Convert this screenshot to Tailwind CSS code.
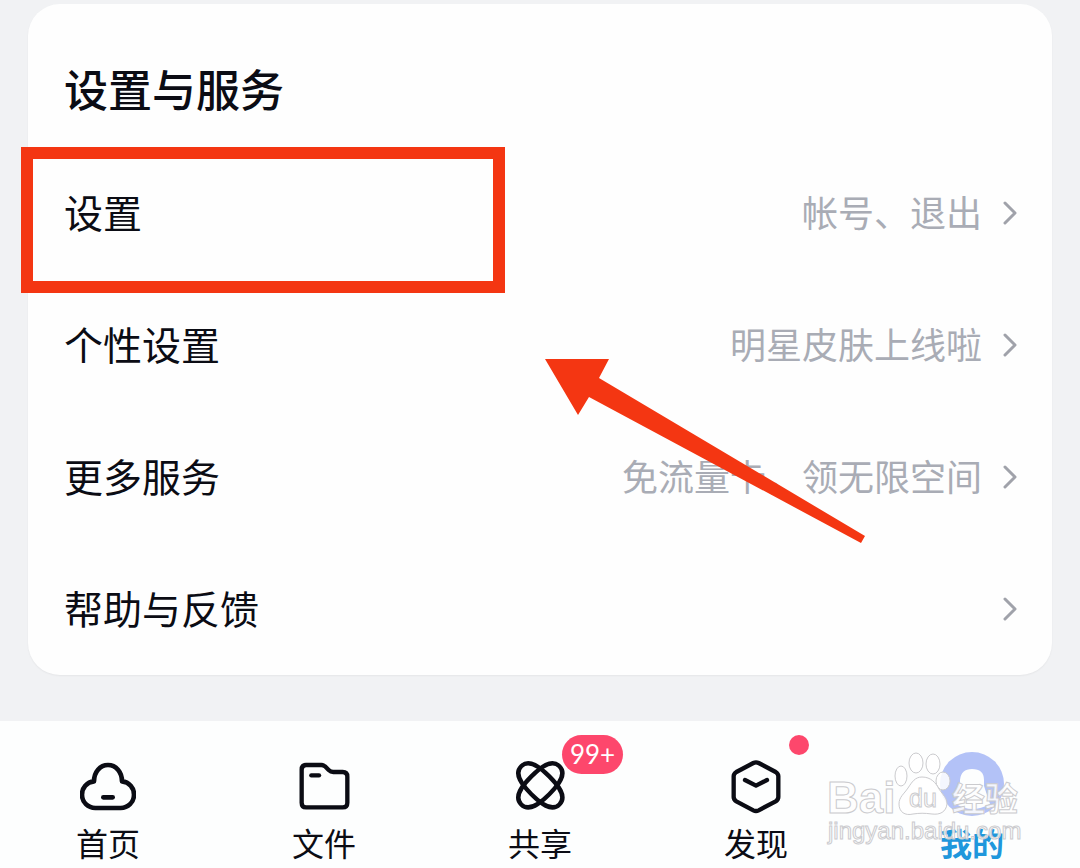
<!DOCTYPE html>
<html lang="zh-CN">
<head>
    <meta charset="UTF-8">
    <meta name="viewport" content="width=device-width, initial-scale=1.0">
    <title>设置与服务</title>
    <script src="https://cdn.jsdelivr.net/npm/@tailwindcss/browser@4"></script>
</head>
<body class="min-h-screen flex flex-col overflow-hidden bg-[#f1f2f4] text-[#0b0c14] font-['Noto_Sans_CJK_SC',sans-serif]">
    <!-- Settings card -->
    <main class="relative px-7 pt-1 pb-[46px]">
        <section class="bg-[#fefefe] rounded-[32px] pl-9 pr-[34px] shadow-xs">
            <h1 class="pt-[52px] pb-[27px] text-[44px] leading-[64px] font-medium">设置与服务</h1>
            <ul>
                <li>
                    <a href="#settings" class="flex items-center justify-between h-[132px]">
                        <span class="pb-1 text-[39px]">设置</span>
                        <span class="flex items-center gap-5 text-[36px] text-[#a9acb5]">
                            <span class="pb-1">帐号、退出</span>
                            <svg class="w-4 h-6" viewBox="0 0 16 24" fill="none" stroke="#a0a2aa" stroke-width="3" stroke-linecap="round" stroke-linejoin="round"><path d="M3 2l10 10L3 22"/></svg>
                        </span>
                    </a>
                </li>
                <li>
                    <a href="#personal" class="flex items-center justify-between h-[132px]">
                        <span class="pb-1 text-[39px]">个性设置</span>
                        <span class="flex items-center gap-5 text-[36px] text-[#a9acb5]">
                            <span class="pb-1">明星皮肤上线啦</span>
                            <svg class="w-4 h-6" viewBox="0 0 16 24" fill="none" stroke="#a0a2aa" stroke-width="3" stroke-linecap="round" stroke-linejoin="round"><path d="M3 2l10 10L3 22"/></svg>
                        </span>
                    </a>
                </li>
                <li>
                    <a href="#more" class="flex items-center justify-between h-[132px]">
                        <span class="pb-1 text-[39px]">更多服务</span>
                        <span class="flex items-center gap-5 text-[36px] text-[#a9acb5]">
                            <span class="pb-1">免流量卡，领无限空间</span>
                            <svg class="w-4 h-6" viewBox="0 0 16 24" fill="none" stroke="#a0a2aa" stroke-width="3" stroke-linecap="round" stroke-linejoin="round"><path d="M3 2l10 10L3 22"/></svg>
                        </span>
                    </a>
                </li>
                <li>
                    <a href="#help" class="flex items-center justify-between h-[132px]">
                        <span class="pb-1 text-[39px]">帮助与反馈</span>
                        <svg class="w-4 h-6" viewBox="0 0 16 24" fill="none" stroke="#a0a2aa" stroke-width="3" stroke-linecap="round" stroke-linejoin="round"><path d="M3 2l10 10L3 22"/></svg>
                    </a>
                </li>
            </ul>
        </section>

        <!-- Highlight box and arrow -->
        <div class="absolute left-[21px] top-[147px] w-[484px] h-[146px] border-[12px] border-[#f43612] pointer-events-none"></div>
        <svg class="absolute left-[545px] top-[358px] w-[320px] h-[186px] pointer-events-none" viewBox="0 0 320 186" fill="#f43612">
            <path d="M0 1H64L54 20L320 178L316 185L44 39L33 57Z"/>
        </svg>
    </main>

    <!-- Bottom tabs -->
    <nav class="relative grow grid grid-cols-5 bg-[#fdfefe] text-[32px] leading-10">
        <a href="#home" class="flex flex-col items-center pt-[39px] gap-1.5">
            <svg class="w-14 h-14" viewBox="0 0 168 168" fill="none" stroke="currentColor" stroke-width="14" stroke-linecap="round" stroke-linejoin="round">
                <path d="M42 64C42 36 60 15 84 15S126 36 126 64C148 66 162 84 162 104C162 127 144 144 122 144H46C24 144 6 127 6 104C6 84 20 66 42 64Z"/>
                <path d="M70 112H98"/>
            </svg>
            <span>首页</span>
        </a>
        <a href="#files" class="flex flex-col items-center pt-[39px] gap-1.5">
            <svg class="w-14 h-14" viewBox="0 0 168 168" fill="none" stroke="currentColor" stroke-width="13" stroke-linecap="round" stroke-linejoin="round">
                <path d="M30 15H76Q82 15 87 19L98 30Q104 36 112 36H140Q154 36 154 50V128Q154 142 140 142H30Q17 142 17 128V29Q17 15 30 15Z"/>
                <path d="M46 46H69"/>
            </svg>
            <span>文件</span>
        </a>
        <a href="#share" class="flex flex-col items-center pt-[39px] gap-1.5">
            <span class="relative">
                <svg class="w-14 h-14" viewBox="0 0 168 168" fill="none" stroke="currentColor" stroke-width="13">
                    <path d="M-81 0C-81 -34 -38 -38 0 -38S81 -34 81 0S38 38 0 38S-81 34 -81 0Z" transform="translate(85 76) rotate(45)"/>
                    <path d="M-81 0C-81 -34 -38 -38 0 -38S81 -34 81 0S38 38 0 38S-81 34 -81 0Z" transform="translate(85 76) rotate(-45)"/>
                </svg>
                <span class="absolute left-[50px] -top-[25px] w-[61px] h-[39px] rounded-full bg-[#fd476c] text-white text-[26px] leading-[39px] text-center font-['Lato',sans-serif]">99+</span>
            </span>
            <span>共享</span>
        </a>
        <a href="#discover" class="flex flex-col items-center pt-[39px] gap-1.5">
            <span class="relative">
                <svg class="w-14 h-14" viewBox="0 0 168 168" fill="none" stroke="currentColor" stroke-width="13" stroke-linecap="round" stroke-linejoin="round">
                    <path d="M76 9Q84 5 92 9L143 36Q151 41 151 49V111Q151 119 143 124L92 151Q84 155 76 151L25 124Q17 119 17 111V49Q17 41 25 36Z"/>
                    <path d="M51 60L84 77L117 60"/>
                </svg>
                <span class="absolute left-[61px] -top-[25px] size-5 rounded-full bg-[#fd476c]"></span>
            </span>
            <span>发现</span>
        </a>
        <a href="#mine" class="flex flex-col items-center pt-[31px] gap-1.5 text-[#1f97dc] font-bold">
            <svg class="w-16 h-16" viewBox="0 0 64 64">
                <circle cx="32" cy="32" r="32" fill="#b3c2f7"/>
                <path d="M20 28Q21 17 32 17Q44 17 44 28V34L50 52Q32 62 16 52L20 34Z" fill="#fdfefe"/>
            </svg>
            <span>我的</span>
        </a>

        <!-- Watermark -->
        <svg class="absolute right-[56px] top-7 w-[200px] h-[100px] pointer-events-none" viewBox="0 0 200 100" fill="#fff" fill-opacity="0.85" stroke="#cbcbce" stroke-width="1">
            <text x="3" y="64" font-family="Liberation Sans" font-weight="bold" font-size="44">Bai</text>
            <ellipse cx="77" cy="27" rx="6" ry="10"/>
            <ellipse cx="92" cy="14" rx="7" ry="10"/>
            <ellipse cx="109" cy="15" rx="7" ry="10"/>
            <ellipse cx="119" cy="32" rx="7" ry="9"/>
            <path d="M98 28C107 28 112 34 115 40C119 46 123 49 123 55C122 63 116 66 108 65C100 64 96 64 89 65C81 67 75 63 75 55C75 48 80 45 84 39C88 33 91 28 98 28Z"/>
            <text x="85" y="58" font-family="Liberation Sans" font-size="25">du</text>
            <text x="128" y="62" font-family="Noto Sans CJK SC" font-weight="bold" font-size="33">经验</text>
            <text x="4" y="90" font-family="Liberation Sans" font-size="24">jingyan.baidu.com</text>
        </svg>
    </nav>
</body>
</html>
